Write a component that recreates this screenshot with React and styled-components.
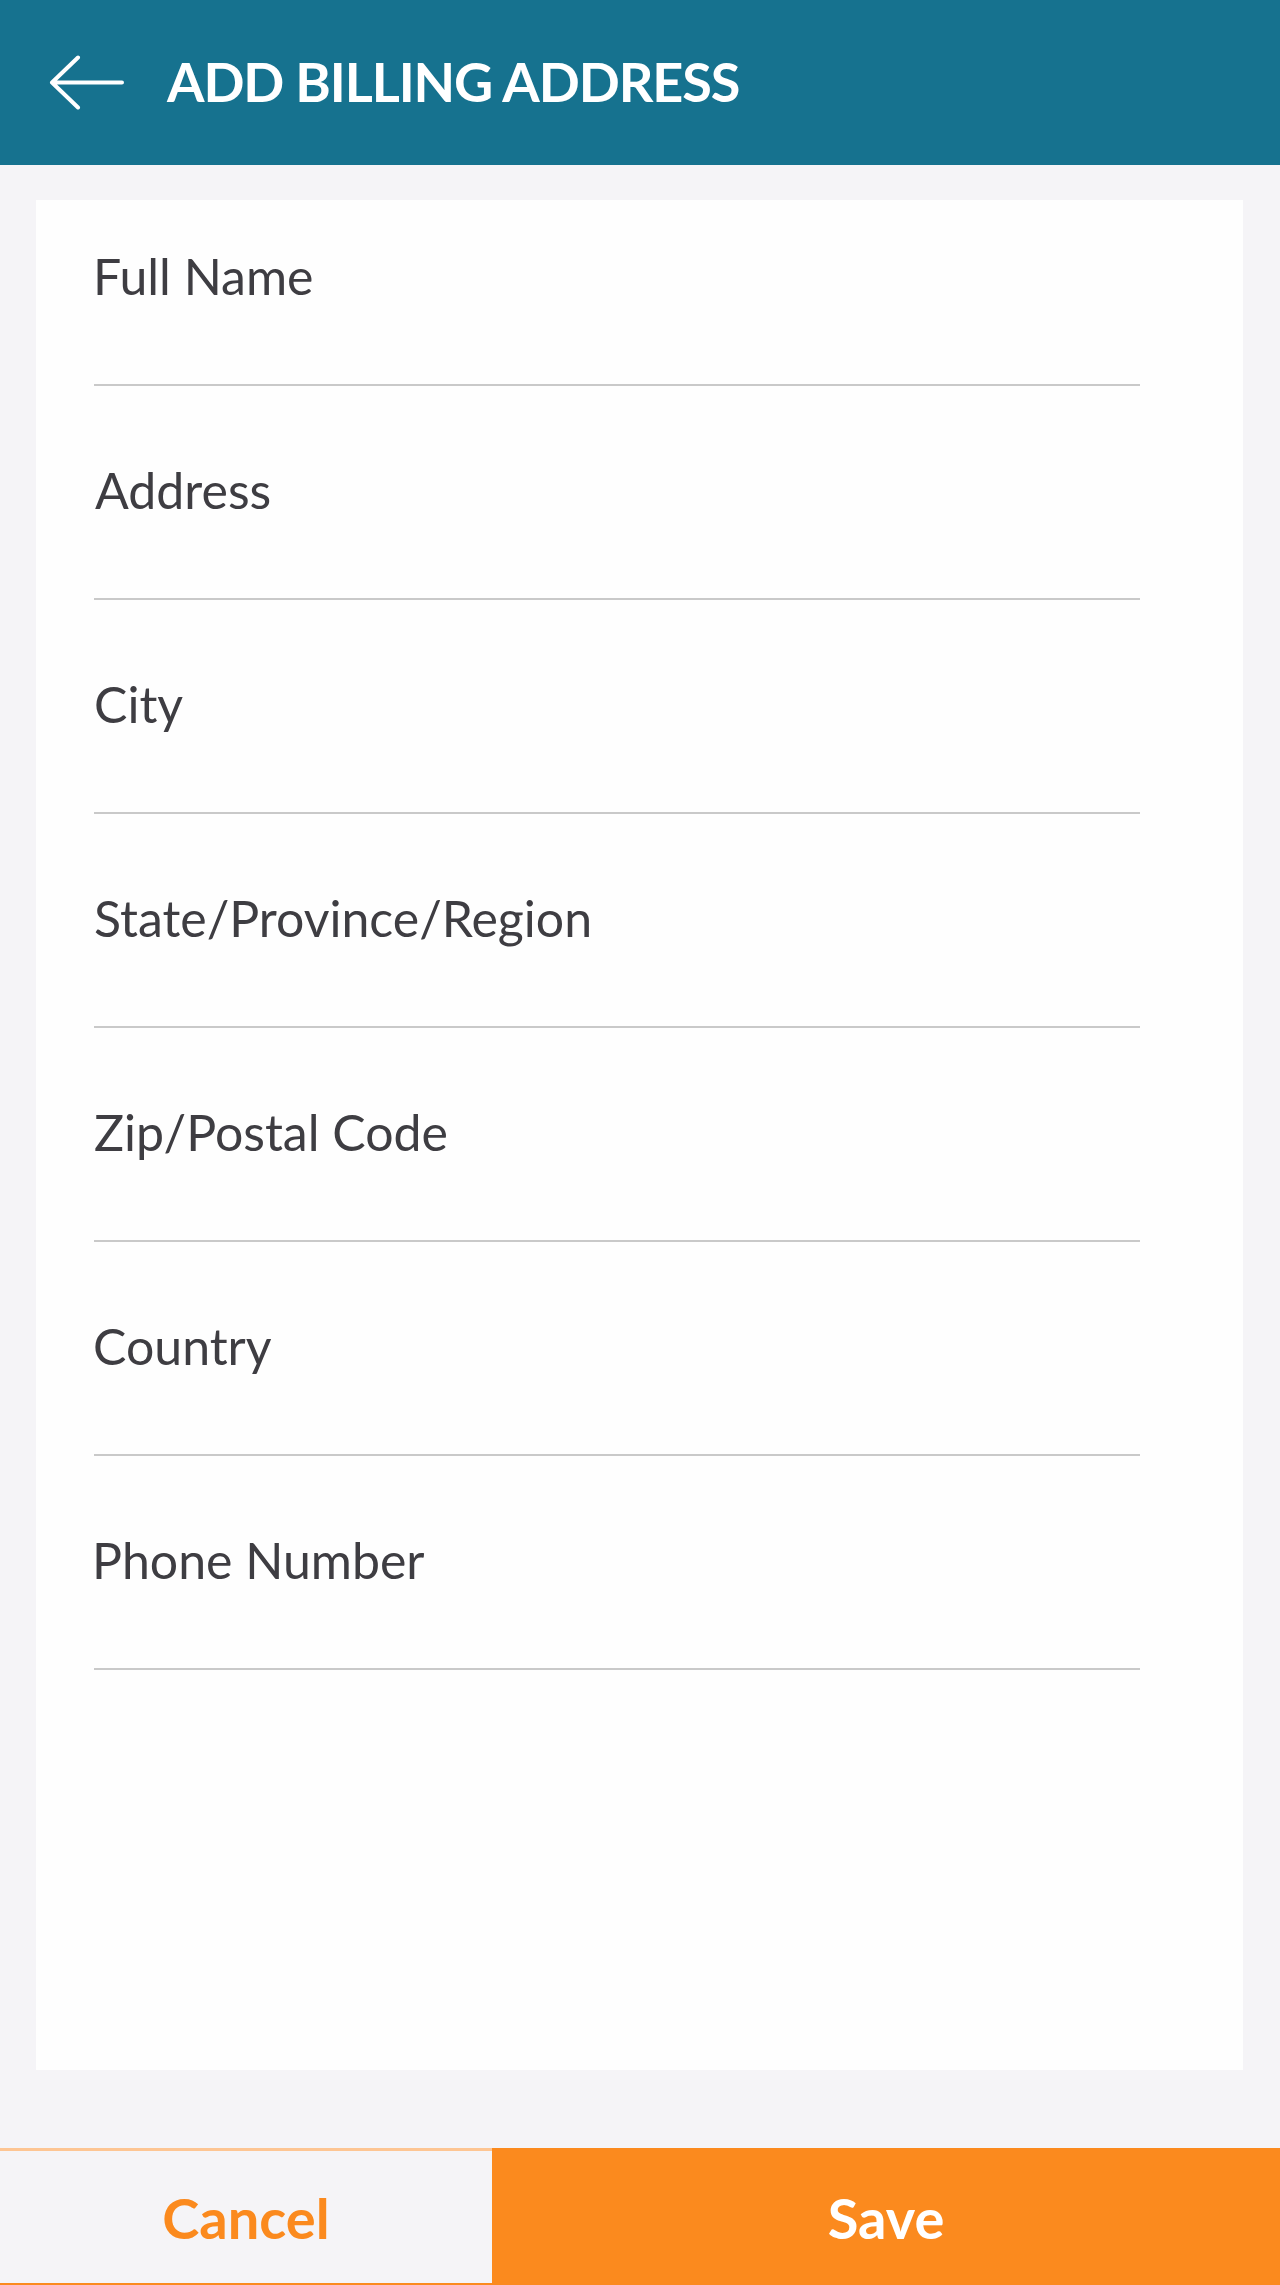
import React from 'react';
import styled, { createGlobalStyle } from 'styled-components';

const GlobalStyle = createGlobalStyle`
	html, body {
		margin: 0;
		padding: 0;
		background: #f5f4f7;
		font-family: Lato, 'Noto Sans', sans-serif;
	}

	* {
		box-sizing: border-box;
	}
`;

const Screen = styled.div`
	display: flex;
	flex-direction: column;
	min-height: 2285px;
	background: #f5f4f7;
`;

const Header = styled.header`
	align-items: center;
	background: #16728f;
	display: flex;
	flex-shrink: 0;
	gap: 43px;
	height: 165px;
	padding-left: 49px;
`;

const BackButton = styled.button`
	background: none;
	border: 0;
	cursor: pointer;
	display: flex;
	padding: 0;
`;

const Title = styled.h1`
	color: #ffffff;
	font-size: 54px;
	font-weight: 700;
	letter-spacing: -1.1px;
	line-height: 1.2;
	margin: 0;
`;

const Content = styled.main`
	display: flex;
	flex: 1;
	flex-direction: column;
	padding: 35px 37px 78px 36px;
`;

const Card = styled.form`
	background: #fefefe;
	display: flex;
	flex: 1;
	flex-direction: column;
	gap: 74px;
	padding: 46px 103px 0 58px;
`;

const Field = styled.div`
	display: flex;
	flex-direction: column;
`;

const FieldLabel = styled.label`
	color: #3e3d42;
	font-size: 50px;
	font-weight: 400;
	line-height: 60px;
	margin-left: ${props => props.offset || 0}px;
`;

const Input = styled.input`
	background: transparent;
	border: 0;
	border-bottom: 2px solid #c9c9c9;
	color: #3e3d42;
	font-family: inherit;
	font-size: 50px;
	height: 80px;
	outline: none;
	padding: 0;
	width: 100%;
`;

const ActionBar = styled.footer`
	display: grid;
	flex-shrink: 0;
	grid-template-columns: 492px 1fr;
	height: 137px;
`;

const ActionButton = styled.button`
	background: ${props => (props.primary ? '#fb8a1e' : '#f5f4f7')};
	border: 0;
	border-top: 3px solid ${props => (props.primary ? '#fb8a1e' : '#fdc593')};
	border-bottom: 2px solid #fb8a1e;
	color: ${props => (props.primary ? '#ffffff' : '#fb8a1e')};
	cursor: pointer;
	font-family: inherit;
	font-size: 56px;
	font-weight: 700;
	padding: 0;
`;

const fields = [
	{ id: 'fullName', label: 'Full Name', offset: -1 },
	{ id: 'address', label: 'Address', offset: 1 },
	{ id: 'city', label: 'City', offset: 0 },
	{ id: 'region', label: 'State/Province/Region', offset: 0 },
	{ id: 'zip', label: 'Zip/Postal Code', offset: 0 },
	{ id: 'country', label: 'Country', offset: -1 },
	{ id: 'phone', label: 'Phone Number', offset: -2 }
];

const BackArrow = () => (
	<svg width="75" height="55" viewBox="0 0 75 55" fill="none">
		<path
			d="M73 27.5H3M29 2.5L3 27.5L29 52.5"
			stroke="#ffffff"
			strokeWidth="4"
			strokeLinecap="round"
			strokeLinejoin="round"
		/>
	</svg>
);

const App = () => (
	<>
		<GlobalStyle />
		<Screen>
			<Header>
				<BackButton type="button" aria-label="Back">
					<BackArrow />
				</BackButton>
				<Title>ADD BILLING ADDRESS</Title>
			</Header>
			<Content>
				<Card onSubmit={e => e.preventDefault()}>
					{fields.map(field => (
						<Field key={field.id}>
							<FieldLabel htmlFor={field.id} offset={field.offset}>
								{field.label}
							</FieldLabel>
							<Input id={field.id} type="text" />
						</Field>
					))}
				</Card>
			</Content>
			<ActionBar>
				<ActionButton type="button">Cancel</ActionButton>
				<ActionButton type="button" primary>
					Save
				</ActionButton>
			</ActionBar>
		</Screen>
	</>
);

export default App;
